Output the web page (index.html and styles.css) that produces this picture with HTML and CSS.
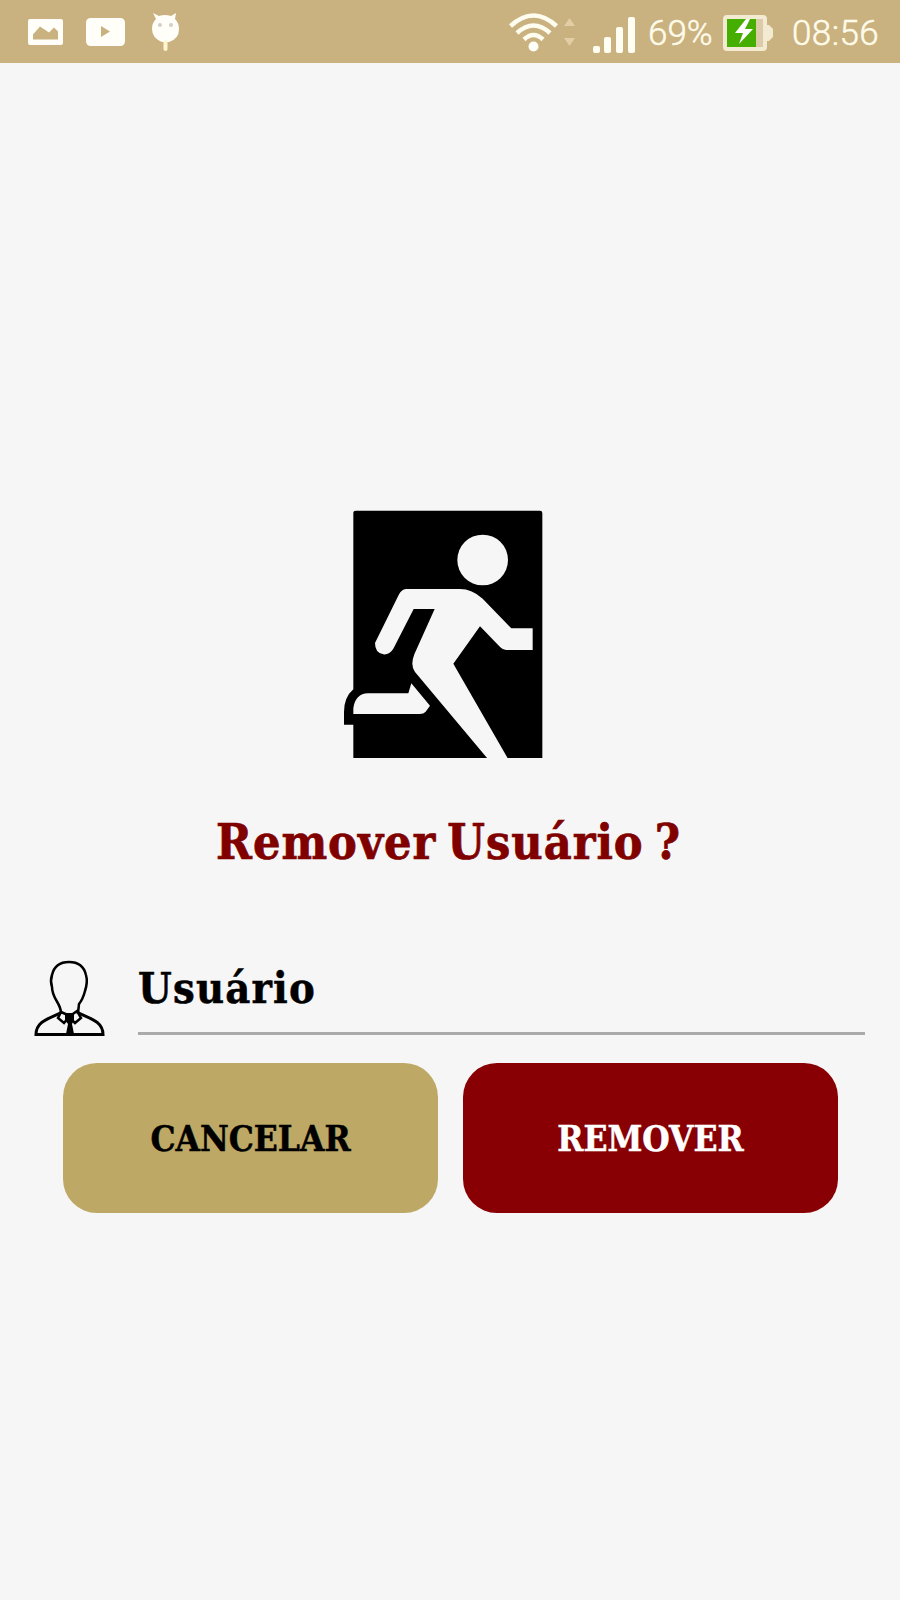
FILE: index.html
```html
<!DOCTYPE html>
<html lang="pt-BR">
<head>
<meta charset="utf-8">
<title>Remover Usuário</title>
<link rel="stylesheet" href="styles.css">
</head>
<body>
<header class="status">
  <svg class="notifications" viewBox="0 0 300 63" width="300" height="63">
    <path fill="#fffef8" fill-rule="evenodd" d="M30 19h31q2 0 2 2v22q0 2-2 2h-31q-2 0-2-2v-22q0-2 2-2zM33 39.500h25v-8l-4-4-5 5-9-6-7 8z"/>
    <path fill="#fffef8" fill-rule="evenodd" d="M91 18h29q5 0 5 5v18q0 5-5 5h-29q-5 0-5-5v-18q0-5 5-5zM101 26v11l9-5.500z"/>
    <path fill="#fffef8" d="M153 13l6 3q6-2 12 0l5-3-1 6q4 4 4 10 0 10-10 13h-7q-10-4-10-13 0-6 4-10z"/>
    <path stroke="#fff5ce" stroke-width="4" stroke-linecap="round" d="M165.500 42v7"/>
    <g fill="#d5cfc4"><circle cx="160" cy="25" r="2"/><circle cx="171" cy="25" r="2"/></g>
  </svg>
  <div class="system">
    <svg class="signals" viewBox="505 0 134 63" width="134" height="63">
      <g fill="none" stroke="#fffdf0" stroke-width="4.500">
        <path d="M510.500 26q23-21 46 0M517 33q16.500-15 33 0M524 39.500q9.500-9 19 0"/>
      </g>
      <circle cx="533.500" cy="46.500" r="5" fill="#fffef8"/>
      <path fill="#e2cda5" d="M564 26l5.500-8 5.500 8zM564 38h11l-5.500 8z"/>
      <g fill="#fffef3"><rect x="593" y="46" width="7" height="7" rx="2"/><rect x="604" y="37" width="7" height="16" rx="2"/><rect x="616" y="27" width="7" height="26" rx="2"/><rect x="628" y="17" width="7" height="36" rx="2"/></g>
    </svg>
    <span class="percent">69%</span>
    <svg class="battery" viewBox="722 0 54 63" width="54" height="63">
      <path fill="#f3ead2" d="M727 15h36q4 0 4 4v6h2l4 4v8l-4 4h-2v6q0 4-4 4h-36q-4 0-4-4v-28q0-4 4-4z"/>
      <path fill="#dccba8" d="M756 19h7v28h-7z"/>
      <path fill="#46ae00" d="M727 19h29v28h-29z"/>
      <path fill="#fff" d="M746 19l-11 14h8l-4 11 14-15h-8l5-10z"/>
    </svg>
    <span class="clock">08:56</span>
  </div>
</header>
<main class="screen">
  <svg class="exit" viewBox="0 0 750 870" width="250" height="290">
    <path d="M108 62H660q7 0 7 7V804H100V704H72V666Q72 622 100 598V69q0-7 8-7z"/>
    <g fill="#f6f6f6">
      <circle cx="488" cy="210" r="76"/>
      <path d="M258 297H420Q456 297 488 326L574 415H638V480H558Q549 480 541 472L480 409 400 521 564 806H503L285 546Q270 526 283 493L344 357H281L220 476Q208 495 190 493 165 489 165 459L236 315Q244 298 258 297z"/>
      <path d="M274 580L330 647 317 665Q311 672 299 672H100V655Q106 611 144 610H265z"/>
    </g>
  </svg>
  <h1 class="title"><span>Remover Usuário ?</span></h1>
  <form class="form">
    <div class="field">
      <svg class="person" viewBox="0 0 72 78" width="72" height="78" fill="none" stroke="#000" stroke-width="3">
        <path stroke-width="2.500" d="M27 54C27 44 18 40 18 28Q16 22 18 16 21 3 35 3T52 16Q54 23 51 32 49 40 45 45L44 54"/>
        <path d="M28 53C18 59 2 61 2 75.500H69C69 61 53 59 43 53"/>
        <path stroke-width="2.500" d="M27 53l-3 6 6 5 5-6 6 6 6-5-4-7-7 5z"/>
        <path fill="#000" stroke="none" d="M31 54h9v7l-2 4 2 10h-8l2-10-3-4z"/>
      </svg>
      <div class="input"><span>Usuário</span></div>
    </div>
    <div class="actions">
      <button type="button" class="button cancel"><span>CANCELAR</span></button>
      <button type="button" class="button remove"><span>REMOVER</span></button>
    </div>
  </form>
</main>
</body>
</html>
```
FILE: styles.css
```css
* { box-sizing: border-box; }
body { margin: 0; min-height: 1600px; background: #f6f6f6; font-family: "DejaVu Serif Condensed", "DejaVu Serif", serif; font-stretch: condensed; }
svg { display: block; flex: none; }
.status { display: flex; justify-content: space-between; height: 63px; background: #c9b27f; }
.system { display: flex; padding-right: 20px; font: 300 35px/67px Roboto, sans-serif; color: #fffbea; -webkit-text-stroke: 0.5px #fffbea; }
.percent { width: 83px; padding-left: 9px; }
.clock { width: 88px; margin-left: 16px; white-space: nowrap; letter-spacing: 0.400px; }
.screen { display: flex; flex-direction: column; padding-top: 427px; }
.exit { margin-left: 320px; }
.title { display: flex; justify-content: center; margin: 30px 0 0; padding-right: 3px; height: 70px; font-size: 48px; line-height: 64px; color: #800000; white-space: nowrap; letter-spacing: 1px; word-spacing: -5px; -webkit-text-stroke: 0.700px #800000; }
.form { padding-top: 79px; }
.field { display: flex; align-items: flex-end; gap: 33px; padding: 0 35px 0 33px; height: 78px; }
.person { margin-left: 1px; margin-right: -1px; }
.input { flex: 1; height: 77px; margin-bottom: 2px; border-bottom: 3px solid #aaa; font-size: 43px; font-weight: bold; line-height: 60px; letter-spacing: 1.200px; -webkit-text-stroke: 0.500px #000; }
.actions { display: grid; grid-template-columns: 375px 375px; gap: 25px; padding: 26px 0 0 63px; }
.button { height: 150px; border: 0; border-radius: 34px; font-family: inherit; font-stretch: condensed; font-size: 35px; font-weight: bold; letter-spacing: 0; -webkit-text-stroke: 0.500px currentColor; }
.cancel { background: #bea866; color: #000; }
.remove { background: #880003; color: #fff; }
```
